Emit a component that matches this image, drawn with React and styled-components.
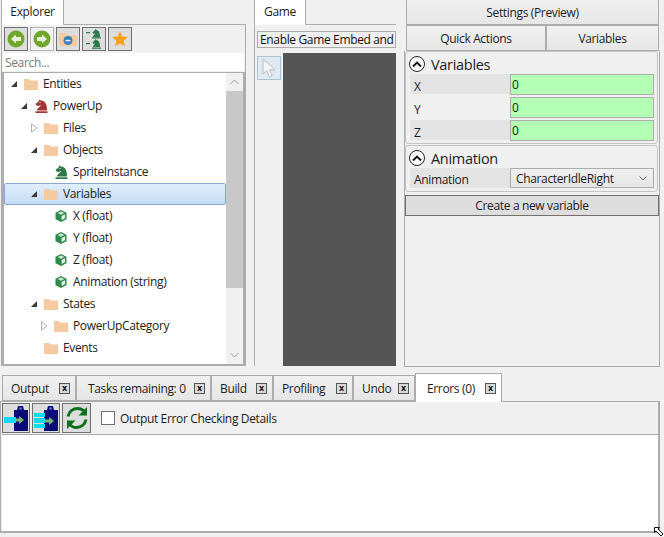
import React from 'react';
import styled, { createGlobalStyle } from 'styled-components';

const GlobalStyle = createGlobalStyle`
  html, body {
    margin: 0;
    padding: 0;
    background: #f0f0f0;
  }
  * {
    box-sizing: border-box;
  }
`;

const treeRows = [
  { depth: 0, arrow: 'open', icon: 'folder', label: 'Entities' },
  { depth: 1, arrow: 'open', icon: 'redKnight', label: 'PowerUp' },
  { depth: 2, arrow: 'closed', icon: 'folder', label: 'Files' },
  { depth: 2, arrow: 'open', icon: 'folder', label: 'Objects' },
  { depth: 3, icon: 'greenKnight', label: 'SpriteInstance' },
  { depth: 2, arrow: 'open', icon: 'folder', label: 'Variables', selected: true },
  { depth: 3, icon: 'cube', label: 'X (float)' },
  { depth: 3, icon: 'cube', label: 'Y (float)' },
  { depth: 3, icon: 'cube', label: 'Z (float)' },
  { depth: 3, icon: 'cube', label: 'Animation (string)' },
  { depth: 2, arrow: 'open', icon: 'folder', label: 'States' },
  { depth: 3, arrow: 'closed', icon: 'folder', label: 'PowerUpCategory' },
  { depth: 2, icon: 'folder', label: 'Events' },
];

const bottomTabs = [
  { label: 'Output', width: 74, inset: 8 },
  { label: 'Tasks remaining: 0', width: 135, inset: 11 },
  { label: 'Build', width: 62, inset: 8 },
  { label: 'Profiling', width: 80, inset: 8 },
  { label: 'Undo', width: 62, inset: 8 },
  { label: 'Errors (0)', width: 87, inset: 11, active: true },
];

const FolderIcon = () => (
  <svg width="14" height="12" viewBox="0 0 14 12">
    <path d="M0 1h5l1.5 1.5H14V12H0z" fill="#f5caa0" />
  </svg>
);

const KnightIcon = ({ color, size = 14 }) => (
  <svg width={size} height={size} viewBox="0 0 14 14">
    <path
      d="M3 11.5C3 9 6.5 8 7 6L4.5 7 2.5 6.5 1.5 5 5 2V.5L7 1.5C11 1.5 13 5 13 11.5z"
      fill={color}
    />
    <rect x="1.5" y="12.3" width="12" height="1.7" fill={color} />
    <rect x="5.5" y="3" width="1" height="1" fill="#fff" />
  </svg>
);

const CubeIcon = () => (
  <svg width="12" height="12" viewBox="0 0 12 12">
    <path d="M6 0l5.5 2.8v6.4L6 12 .5 9.2V2.8z" fill="#2f8a4c" />
    <path d="M6 1.4l3.4 1.7L6 4.8 2.6 3.1z" fill="#cfe8d6" />
    <path d="M6.6 6v4l3.4-1.7v-4z" fill="#e7f3ea" />
  </svg>
);

const ArrowLeftIcon = ({ flip }) => (
  <svg width="20" height="20" viewBox="0 0 20 20">
    <circle cx="10" cy="10" r="8.5" fill="#6fa62c" />
    <path
      d={flip ? 'M15 10l-5-4.5V8H5v4h5v2.5z' : 'M5 10l5-4.5V8h5v4h-5v2.5z'}
      fill="#e6f0d6"
    />
  </svg>
);

const FolderMinusIcon = () => (
  <svg width="18" height="14" viewBox="0 0 18 14">
    <path d="M0 1h6l2 2h10v11H0z" fill="#f5caa0" />
    <circle cx="9" cy="8.5" r="4.5" fill="#3b7fb5" />
    <rect x="6.5" y="7.8" width="5" height="1.5" fill="#e8eef5" />
  </svg>
);

const CollapseIcon = () => (
  <svg width="16" height="20" viewBox="0 0 16 20">
    <rect x="0" y="3" width="4" height="1.2" fill="#2e7a4a" />
    <rect x="0" y="14" width="4" height="1.2" fill="#2e7a4a" />
    <path d="M7 8c0-2 2-2.5 2-3.5L7.5 5 6.5 3.5 9 1l.5-1 1 1c2.5.3 3.5 3 3.5 7z" fill="#2e7a4a" />
    <rect x="6" y="8.2" width="9" height="1.3" fill="#2e7a4a" />
    <path d="M7 18c0-2 2-2.5 2-3.5L7.5 15l-1-1.5L9 11l.5-1 1 1c2.5.3 3.5 3 3.5 7z" fill="#2e7a4a" />
    <rect x="6" y="18.5" width="9" height="1.3" fill="#2e7a4a" />
  </svg>
);

const StarIcon = () => (
  <svg width="16" height="16" viewBox="0 0 16 16">
    <path d="M8 .5l2.3 5 5.4.6-4 3.7 1.1 5.4L8 12.5l-4.8 2.7 1.1-5.4-4-3.7 5.4-.6z" fill="#f9a11b" />
  </svg>
);

const CursorIcon = () => (
  <svg width="14" height="21" viewBox="0 0 14 21">
    <path d="M1 1v15l3.8-3.5L7.5 19l2.8-1.200-2.700-6H13z" fill="#f4f6f8" stroke="#bcbcbc" />
  </svg>
);

const ClipboardIcon = ({ stacked }) => (
  <svg width="26" height="26" viewBox="0 0 26 26">
    <path d="M11 5h3l1-4h5l1 4h4v21H11z" fill="#0a0a78" />
    <rect x="16.5" y="2.5" width="2" height="2" fill="#8f8fc8" />
    {stacked ? (
      <>
        <rect x="1" y="8" width="11" height="4" fill="#18d8f5" />
        <rect x="1" y="13" width="11" height="5" fill="#18d8f5" />
        <rect x="1" y="19" width="11" height="4" fill="#18d8f5" />
        <path d="M12 14.5h4V12l5 4-5 4v-2.500h-4z" fill="#7cb56c" />
      </>
    ) : (
      <>
        <rect x="1" y="12" width="12" height="6" fill="#18d8f5" />
        <path d="M13 13.500h3V11l5 4-5 4v-2.500h-3z" fill="#7cb56c" />
      </>
    )}
  </svg>
);

const RefreshIcon = () => (
  <svg width="26" height="26" viewBox="0 0 26 26" fill="none">
    <path d="M4 11.5C5 6.5 9 3.5 13.5 3.5c3 0 5.5 1.3 7 3.5" stroke="#0c7018" strokeWidth="3" />
    <path d="M23 2v8.5h-8.5z" fill="#0c7018" />
    <path d="M22 14.5C21 19.5 17 22.5 12.5 22.5c-3 0-5.500-1.300-7-3.500" stroke="#0c7018" strokeWidth="3" />
    <path d="M3 24v-8.5h8.5z" fill="#0c7018" />
  </svg>
);

const ChevronUp = () => (
  <svg width="10" height="7" viewBox="0 0 10 7" fill="none">
    <path d="M1 5.5l4-4 4 4" stroke="#111" strokeWidth="1.8" />
  </svg>
);

const ClosedArrow = () => (
  <svg width="7" height="10" viewBox="0 0 7 10">
    <path d="M.5 .8L6 5 .5 9.2z" fill="#fff" stroke="#b0b0b0" />
  </svg>
);

const treeIcons = {
  folder: <FolderIcon />,
  redKnight: <KnightIcon color="#a33434" />,
  greenKnight: <KnightIcon color="#2e7a4a" />,
  cube: <CubeIcon />,
};

const Window = styled.div`
  width: 664px;
  height: 537px;
  background: #f0f0f0;
  font-family: 'Open Sans', 'Noto Sans', sans-serif;
  font-size: 12px;
  letter-spacing: -0.35px;
  color: #1c1c1c;
  position: relative;
  overflow: hidden;
`;

const TopArea = styled.div`
  height: 372px;
  display: flex;
  padding-left: 1px;
`;

const ExplorerColumn = styled.section`
  width: 245px;
  height: 366px;
  display: flex;
  flex-direction: column;
`;

const GameColumn = styled.section`
  width: 142px;
  height: 366px;
  margin-left: 8px;
  display: flex;
  flex-direction: column;
`;

const SettingsColumn = styled.section`
  width: 256px;
  height: 367px;
  margin-left: 8px;
  display: flex;
  flex-direction: column;
`;

const PanelTab = styled.div`
  height: 25px;
  width: ${(p) => p.$width}px;
  margin-bottom: -1px;
  position: relative;
  z-index: 1;
  background: #fff;
  border: 1px solid #acacac;
  border-bottom: none;
  border-top: none;
  display: flex;
  align-items: center;
  justify-content: center;
  padding-bottom: 2px;
`;

const ExplorerPanel = styled.div`
  flex: 1;
  min-height: 0;
  display: flex;
  flex-direction: column;
  border: 1px solid #acacac;
  border-bottom: none;
  padding: 2px 1px 0;
`;

const ExplorerToolbar = styled.div`
  display: flex;
  gap: 2px;
  padding-left: 1px;
  height: 24px;
`;

const ToolButton = styled.button`
  width: 24px;
  height: 24px;
  padding: 0;
  background: ${(p) => (p.$light ? '#f1f1f1' : '#dddddd')};
  border: 1px solid ${(p) => (p.$light ? '#b4b4b4' : '#707070')};
  display: flex;
  align-items: center;
  justify-content: center;
`;

const SearchBox = styled.div`
  height: 18px;
  margin-top: 2px;
  background: #fff;
  padding-left: 2px;
  color: #787878;
  display: flex;
  align-items: center;
`;

const TreeFrame = styled.div`
  flex: 1;
  min-height: 0;
  margin: 1px -1px 0;
  display: flex;
  background: #fff;
  border: solid #acacac;
  border-width: 1px 2px 2px 2px;
`;

const TreeList = styled.div`
  flex: 1;
  min-width: 0;
`;

const TreeRow = styled.div`
  height: 22px;
  display: flex;
  align-items: center;
  padding-left: ${(p) => 7 + p.$depth * 10}px;
  ${(p) =>
    p.$selected &&
    `
    background: linear-gradient(#e0eefc, #c3dcf6);
    border: 1px solid #8aa9cf;
    border-radius: 2px;
    padding-left: ${6 + p.$depth * 10}px;
  `}
`;

const TreeLabel = styled.span`
  margin-top: -2px;
  color: #222;
`;

const ArrowSlot = styled.span`
  width: 13px;
  height: 10px;
  flex: none;
  display: flex;
  align-items: center;
`;

const OpenArrow = styled.span`
  width: 0;
  height: 0;
  border-style: solid;
  border-width: 0 0 6px 6px;
  border-color: transparent transparent #3a3a3a transparent;
`;

const IconSlot = styled.span`
  width: 14px;
  flex: none;
  margin-right: 5px;
  display: flex;
  align-items: center;
  justify-content: center;
`;

const Scrollbar = styled.div`
  width: 17px;
  flex: none;
  background: #f0f0f0;
  display: flex;
  flex-direction: column;
`;

const ScrollArrow = styled.div`
  height: 18px;
  flex: none;
  display: flex;
  align-items: center;
  justify-content: center;
`;

const ScrollThumb = styled.div`
  height: 197px;
  background: #c8c8c8;
`;

const ScrollSpacer = styled.div`
  flex: 1;
`;

const GamePanel = styled.div`
  flex: 1;
  min-height: 0;
  display: flex;
  flex-direction: column;
  border-top: 1px solid #acacac;
  border-left: 1px solid #acacac;
  padding: 6px 0 0 2px;
`;

const EmbedBar = styled.div`
  height: 17px;
  border: 1px solid #acacac;
  padding-left: 2px;
  display: flex;
  align-items: center;
  white-space: nowrap;
  overflow: hidden;
  color: #111;
`;

const GameBody = styled.div`
  flex: 1;
  min-height: 0;
  margin-top: 5px;
  display: flex;
`;

const CursorButton = styled.div`
  width: 24px;
  height: 24px;
  margin-top: 3px;
  background: #dfe9f2;
  border: 1px solid #a9c4da;
  display: flex;
  align-items: center;
  justify-content: center;
`;

const GameViewport = styled.div`
  flex: 1;
  margin-left: 2px;
  background: #555555;
`;

const SettingsTab = styled.div`
  height: ${(p) => p.$height}px;
  flex: ${(p) => p.$grow || 'none'};
  background: linear-gradient(#f0f0f0, #e6e6e6);
  border: 1px solid #acacac;
  border-top: ${(p) => (p.$flushTop ? 'none' : '1px solid #acacac')};
  display: flex;
  align-items: center;
  justify-content: center;
`;

const SettingsTabRow = styled.div`
  display: flex;
  margin-left: 2px;
  width: 253px;
`;

const SettingsBody = styled.div`
  flex: 1;
  min-height: 0;
  border: 1px solid #acacac;
  border-top: none;
  display: flex;
  flex-direction: column;
`;

const GroupBox = styled.div`
  margin-right: 1px;
  border: 1px solid #c4c4c4;
  border-radius: 3px;
  padding: 2px 3px 3px 4px;
  & + & {
    margin-top: 1px;
  }
`;

const GroupHeader = styled.div`
  height: 20px;
  margin-left: -1px;
  display: flex;
  align-items: center;
  gap: 6px;
  font-size: 14.5px;
  letter-spacing: -0.3px;
  color: #222;
`;

const ExpanderCircle = styled.span`
  width: 16px;
  height: 16px;
  border: 1.5px solid #222;
  border-radius: 50%;
  background: #fff;
  display: flex;
  align-items: center;
  justify-content: center;
  flex: none;
`;

const PropRow = styled.div`
  height: 20px;
  margin-top: ${(p) => (p.$first ? 0 : 3)}px;
  display: grid;
  grid-template-columns: 100px 1fr;
  background: ${(p) => (p.$shaded ? '#e3e3e3' : 'transparent')};
`;

const PropLabel = styled.div`
  padding: ${(p) => (p.$low ? 4 : 2)}px 0 0 4px;
  display: flex;
  align-items: center;
`;

const ValueInput = styled.div`
  background: #b3ffb3;
  border: 1px solid #acacac;
  padding-left: 1px;
  display: flex;
  align-items: center;
`;

const ComboBox = styled.div`
  background: linear-gradient(#f0f0f0, #e6e6e6);
  border: 1px solid #acacac;
  padding: 0 6px 0 5px;
  display: flex;
  align-items: center;
  justify-content: space-between;
`;

const CreateButton = styled.button`
  height: 21px;
  margin: 3px 0 0 0;
  width: 254px;
  padding: 0;
  background: #dddddd;
  border: 1px solid #707070;
  font: inherit;
  letter-spacing: inherit;
  color: #222;
`;

const TabStrip = styled.div`
  height: 29px;
  display: flex;
  align-items: flex-end;
  padding-left: 2px;
  position: relative;
  z-index: 1;
`;

const BottomTab = styled.div`
  width: ${(p) => p.$width}px;
  height: ${(p) => (p.$active ? 29 : 26)}px;
  margin-bottom: ${(p) => (p.$active ? -1 : 0)}px;
  background: ${(p) => (p.$active ? '#fff' : 'linear-gradient(#f0f0f0, #e5e5e5)')};
  border: 1px solid #acacac;
  border-bottom: ${(p) => (p.$active ? 'none' : '1px solid #acacac')};
  display: flex;
  align-items: center;
  justify-content: space-between;
  padding: 0 5px 0 ${(p) => p.$inset}px;
`;

const CloseBox = styled.span`
  width: 11px;
  height: 11px;
  flex: none;
  border: 1px solid #555;
  background: #d8d8d8;
  color: #111;
  font-family: 'DejaVu Sans', sans-serif;
  font-size: 8px;
  font-weight: 700;
  letter-spacing: 0;
  line-height: 9px;
  text-align: center;
`;

const OutputPanel = styled.div`
  width: 660px;
  height: 132px;
  border: 1px solid #acacac;
  border-right-width: 2px;
  border-bottom-width: 2px;
  display: flex;
  flex-direction: column;
`;

const OutputToolbar = styled.div`
  height: 32px;
  flex: none;
  display: flex;
  align-items: flex-start;
  gap: 2px;
  padding: 1px 0 0 1px;
`;

const OutputButton = styled.button`
  width: ${(p) => p.$width || 28}px;
  height: 30px;
  padding: 0;
  background: #dddddd;
  border: 1px solid #707070;
  display: flex;
  align-items: center;
  justify-content: center;
`;

const CheckLabel = styled.label`
  height: 30px;
  margin-left: 8px;
  display: flex;
  align-items: center;
  gap: 5px;
`;

const CheckBox = styled.span`
  width: 14px;
  height: 14px;
  background: #fff;
  border: 1px solid #707070;
`;

const OutputBody = styled.div`
  flex: 1;
  background: #fff;
  margin-left: 1px;
  border-top: 1px solid #acacac;
`;

const ResizeGrip = styled.svg`
  position: absolute;
  right: 0;
  bottom: 0;
`;

const App = () => (
  <Window>
    <GlobalStyle />
    <TopArea>
      <ExplorerColumn>
        <PanelTab $width={63}>Explorer</PanelTab>
        <ExplorerPanel>
          <ExplorerToolbar>
            <ToolButton><ArrowLeftIcon /></ToolButton>
            <ToolButton $light><ArrowLeftIcon flip /></ToolButton>
            <ToolButton><FolderMinusIcon /></ToolButton>
            <ToolButton><CollapseIcon /></ToolButton>
            <ToolButton><StarIcon /></ToolButton>
          </ExplorerToolbar>
          <SearchBox>Search...</SearchBox>
          <TreeFrame>
            <TreeList>
              {treeRows.map((row) => (
                <TreeRow key={row.label} $depth={row.depth} $selected={row.selected}>
                  <ArrowSlot>
                    {row.arrow === 'open' && <OpenArrow />}
                    {row.arrow === 'closed' && <ClosedArrow />}
                  </ArrowSlot>
                  <IconSlot>{treeIcons[row.icon]}</IconSlot>
                  <TreeLabel>{row.label}</TreeLabel>
                </TreeRow>
              ))}
            </TreeList>
            <Scrollbar>
              <ScrollArrow>
                <svg width="9" height="6" viewBox="0 0 9 6" fill="none">
                  <path d="M.5 5l4-4 4 4" stroke="#9a9a9a" />
                </svg>
              </ScrollArrow>
              <ScrollThumb />
              <ScrollSpacer />
              <ScrollArrow>
                <svg width="9" height="6" viewBox="0 0 9 6" fill="none">
                  <path d="M.5 1l4 4 4-4" stroke="#9a9a9a" />
                </svg>
              </ScrollArrow>
            </Scrollbar>
          </TreeFrame>
        </ExplorerPanel>
      </ExplorerColumn>

      <GameColumn>
        <PanelTab $width={52}>Game</PanelTab>
        <GamePanel>
          <EmbedBar>Enable Game Embed and</EmbedBar>
          <GameBody>
            <CursorButton><CursorIcon /></CursorButton>
            <GameViewport />
          </GameBody>
        </GamePanel>
      </GameColumn>

      <SettingsColumn>
        <SettingsTabRow>
          <SettingsTab $height={25} $grow="1" $flushTop>Settings (Preview)</SettingsTab>
        </SettingsTabRow>
        <SettingsTabRow>
          <SettingsTab $height={26} $grow="0 0 140px">Quick Actions</SettingsTab>
          <SettingsTab $height={26} $grow="1">Variables</SettingsTab>
        </SettingsTabRow>
        <SettingsBody>
          <GroupBox>
            <GroupHeader>
              <ExpanderCircle><ChevronUp /></ExpanderCircle>
              Variables
            </GroupHeader>
            <PropRow $first $shaded>
              <PropLabel $low>X</PropLabel>
              <ValueInput>0</ValueInput>
            </PropRow>
            <PropRow>
              <PropLabel $low>Y</PropLabel>
              <ValueInput>0</ValueInput>
            </PropRow>
            <PropRow $shaded>
              <PropLabel $low>Z</PropLabel>
              <ValueInput>0</ValueInput>
            </PropRow>
          </GroupBox>
          <GroupBox>
            <GroupHeader>
              <ExpanderCircle><ChevronUp /></ExpanderCircle>
              Animation
            </GroupHeader>
            <PropRow $first $shaded>
              <PropLabel>Animation</PropLabel>
              <ComboBox>
                CharacterIdleRight
                <svg width="8" height="5" viewBox="0 0 8 5" fill="none">
                  <path d="M.5 .5L4 4 7.5 .5" stroke="#666" />
                </svg>
              </ComboBox>
            </PropRow>
          </GroupBox>
          <CreateButton>Create a new variable</CreateButton>
        </SettingsBody>
      </SettingsColumn>
    </TopArea>

    <TabStrip>
      {bottomTabs.map((tab) => (
        <BottomTab key={tab.label} $width={tab.width} $active={tab.active} $inset={tab.inset}>
          {tab.label}
          <CloseBox>x</CloseBox>
        </BottomTab>
      ))}
    </TabStrip>

    <OutputPanel>
      <OutputToolbar>
        <OutputButton><ClipboardIcon /></OutputButton>
        <OutputButton><ClipboardIcon stacked /></OutputButton>
        <OutputButton $width={29}><RefreshIcon /></OutputButton>
        <CheckLabel>
          <CheckBox />
          Output Error Checking Details
        </CheckLabel>
      </OutputToolbar>
      <OutputBody />
    </OutputPanel>

    <ResizeGrip width="10" height="10" viewBox="0 0 10 10" fill="none">
      <path d="M.5 .5h5L4 2l5 5-2 2-5-5-1.500 1.500z" fill="#fff" stroke="#111" />
    </ResizeGrip>
  </Window>
);

export default App;
